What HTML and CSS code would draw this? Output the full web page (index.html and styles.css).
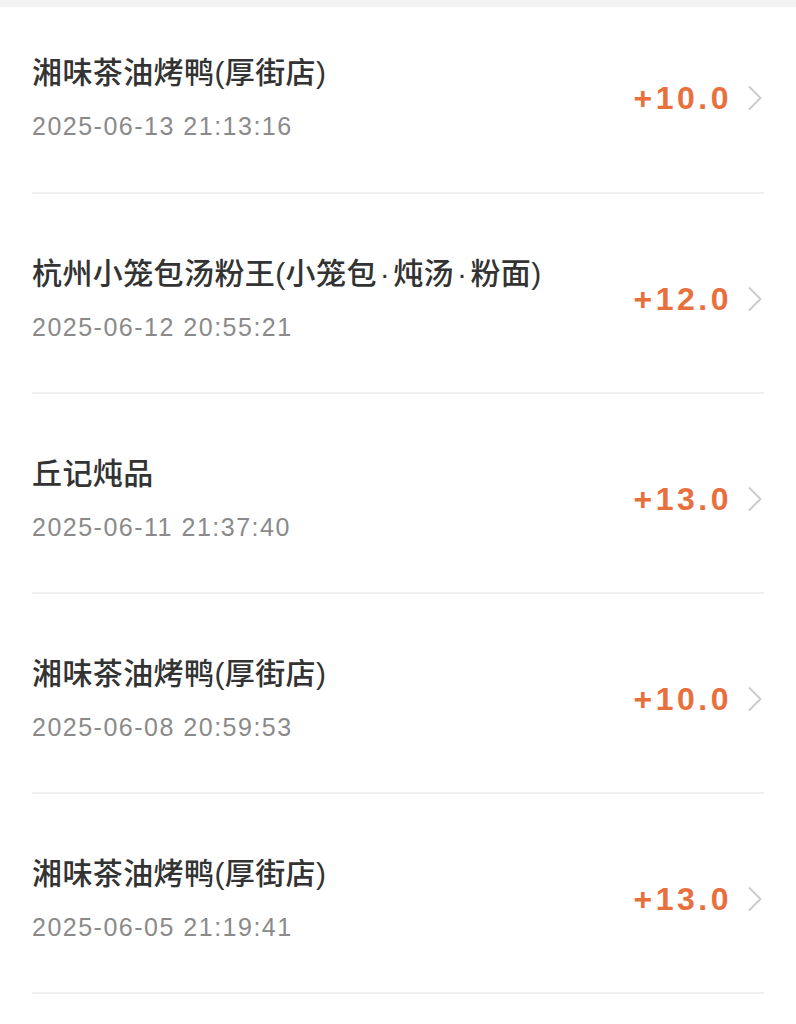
FILE: index.html
```html
<!DOCTYPE html>
<html lang="zh-CN">

<head>
    <meta charset="UTF-8">
    <meta name="viewport" content="width=device-width, initial-scale=1.0">
    <title>积分明细</title>
    <link rel="stylesheet" href="styles.css">
</head>

<body>
    <div class="top-bar"></div>
    <ul class="record-list">
        <li class="record first">
            <div class="record-info">
                <p class="shop-name">湘味茶油烤鸭(厚街店)</p>
                <p class="record-time">2025-06-13 21:13:16</p>
            </div>
            <span class="amount">+10.0</span>
            <svg class="arrow" width="16" height="26" viewBox="0 0 16 26"><path d="M2 1.5 L13.5 13 L2 24.5" fill="none" stroke="#c9c9c9" stroke-width="1.8"/></svg>
        </li>
        <li class="record">
            <div class="record-info">
                <p class="shop-name">杭州小笼包汤粉王(小笼包<span class="dot">·</span>炖汤<span class="dot">·</span>粉面)</p>
                <p class="record-time">2025-06-12 20:55:21</p>
            </div>
            <span class="amount">+12.0</span>
            <svg class="arrow" width="16" height="26" viewBox="0 0 16 26"><path d="M2 1.5 L13.5 13 L2 24.5" fill="none" stroke="#c9c9c9" stroke-width="1.8"/></svg>
        </li>
        <li class="record">
            <div class="record-info">
                <p class="shop-name">丘记炖品</p>
                <p class="record-time">2025-06-11 21:37:40</p>
            </div>
            <span class="amount">+13.0</span>
            <svg class="arrow" width="16" height="26" viewBox="0 0 16 26"><path d="M2 1.5 L13.5 13 L2 24.5" fill="none" stroke="#c9c9c9" stroke-width="1.8"/></svg>
        </li>
        <li class="record">
            <div class="record-info">
                <p class="shop-name">湘味茶油烤鸭(厚街店)</p>
                <p class="record-time">2025-06-08 20:59:53</p>
            </div>
            <span class="amount">+10.0</span>
            <svg class="arrow" width="16" height="26" viewBox="0 0 16 26"><path d="M2 1.5 L13.5 13 L2 24.5" fill="none" stroke="#c9c9c9" stroke-width="1.8"/></svg>
        </li>
        <li class="record">
            <div class="record-info">
                <p class="shop-name">湘味茶油烤鸭(厚街店)</p>
                <p class="record-time">2025-06-05 21:19:41</p>
            </div>
            <span class="amount">+13.0</span>
            <svg class="arrow" width="16" height="26" viewBox="0 0 16 26"><path d="M2 1.5 L13.5 13 L2 24.5" fill="none" stroke="#c9c9c9" stroke-width="1.8"/></svg>
        </li>
    </ul>
</body>

</html>
```

FILE: styles.css
```css
body {
    margin: 0;
    background-color: #fff;
    font-family: "Liberation Sans", "Noto Sans CJK SC", sans-serif;
}

.top-bar {
    height: 7px;
    background-color: #f3f3f3;
}

.record-list {
    list-style: none;
    margin: 0;
    padding: 0 32px;
}

.record {
    display: flex;
    align-items: center;
    padding: 60px 0 48px;
    border-bottom: 2px solid #f0f0f0;
}

/* first row is partly scrolled under the top bar */
.record.first {
    padding-top: 46px;
    padding-bottom: 49px;
}

.record-info {
    flex: 1;
    display: flex;
    flex-direction: column;
    gap: 16px;
}

.shop-name {
    margin: 0;
    /* latin font first so the brackets and dots stay narrow */
    font-family: "Liberation Sans", "Noto Sans CJK SC", sans-serif;
    font-size: 30px;
    font-weight: 500;
    line-height: 40px;
    letter-spacing: 0.4px;
    color: #333;
}

.shop-name .dot {
    padding: 0 3px;
}

.record-time {
    margin: 0;
    font-size: 25px;
    line-height: 34px;
    letter-spacing: 1.5px;
    color: #8a8a8a;
}

.amount {
    font-size: 32px;
    font-weight: 700;
    letter-spacing: 3.5px;
    color: #e8703d;
    margin-right: 15px;
}

.arrow {
    display: block;
    margin-right: 1px;
}
```
